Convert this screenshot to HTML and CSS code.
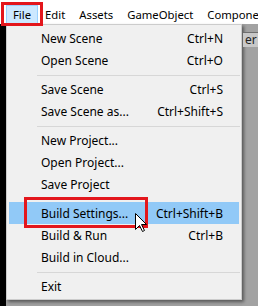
FILE: index.html
```html
<!DOCTYPE html>
<html lang="en">
<head>
  <meta charset="UTF-8">
  <title>File menu</title>
  <link rel="stylesheet" href="styles.css">
</head>
<body>
  <div class="menubar">
    <div class="top-item active">File</div>
    <div class="top-item">Edit</div>
    <div class="top-item">Assets</div>
    <div class="top-item">GameObject</div>
    <div class="top-item">Component</div>
  </div>

  <div class="workspace">
    <div class="left-strip"></div>

    <div class="menu-column">
      <div class="menu">
        <div class="item"><span>New Scene</span><span>Ctrl+N</span></div>
        <div class="item"><span>Open Scene</span><span>Ctrl+O</span></div>
        <div class="sep"></div>
        <div class="item"><span>Save Scene</span><span>Ctrl+S</span></div>
        <div class="item"><span>Save Scene as...</span><span>Ctrl+Shift+S</span></div>
        <div class="sep"></div>
        <div class="item"><span>New Project...</span></div>
        <div class="item"><span>Open Project...</span></div>
        <div class="item"><span>Save Project</span></div>
        <div class="gap"></div>
        <div class="item hover"><span>Build Settings...</span><span>Ctrl+Shift+B</span></div>
        <div class="item"><span>Build &amp; Run</span><span>Ctrl+B</span></div>
        <div class="item"><span>Build in Cloud...</span></div>
        <div class="sep"></div>
        <div class="item"><span>Exit</span></div>
      </div>
    </div>

    <div class="right-pane">
      <div class="tab">er</div>
    </div>
  </div>

  <!-- annotations drawn over the screenshot -->
  <div class="mark mark-file"></div>
  <div class="mark mark-build"></div>
  <svg class="cursor" width="13" height="20" viewBox="0 0 13 20">
    <path d="M0.5 0.5 L0.5 16.5 L4.5 12.5 L7.5 18.5 L9.5 17.5 L6.5 11.5 L11.5 11.5 Z" fill="#fff" stroke="#000" stroke-width="1"/>
  </svg>
</body>
</html>
```

FILE: styles.css
```css
* {
  box-sizing: border-box;
}
body {
  margin: 0;
  width: 258px;
  height: 306px;
  overflow: hidden;
  position: relative;
  font-family: "Noto Sans", "DejaVu Sans", sans-serif;
  font-size: 12px;
  color: #000;
  background: #a2a2a2;
}
.menubar {
  height: 24px;
  background: #fff;
  display: flex;
  padding: 5px 0 0 6px;
  white-space: nowrap;
  overflow: hidden;
  font-size: 11.3px;
}
.top-item {
  height: 19px;
  line-height: 18px;
  padding: 0 6px;
  border: 1px solid transparent;
}
.top-item.active {
  background: #cce8ff;
  border-color: #99d1ff;
}
.workspace {
  display: flex;
  height: 282px;
}
.left-strip {
  width: 6px;
  background: #000;
}
.menu-column {
  width: 236px;
  background: #a0a0a0;
}
.menu {
  background: #f0f0f0;
  border: 1px solid #cccccc;
  padding: 2px 0;
  box-shadow: 2px 2px 3px rgba(0, 0, 0, 0.45);
}
.item {
  height: 22px;
  margin: 0 2px;
  padding: 0 16px 0 32px;
  display: flex;
  align-items: center;
  justify-content: space-between;
  white-space: nowrap;
}
.item.hover {
  background: #91c9f7;
}
.sep {
  margin: 4px 1px 2px 30px;
  border-top: 1px solid #d7d7d7;
}
.gap {
  height: 7px;
}
.right-pane {
  flex: 1;
  padding-top: 8px;
  padding-left: 1px;
}
.tab {
  height: 15px;
  background: #c8c8c8;
  border-top: 1px solid #6e6e6e;
  font-size: 12px;
  line-height: 13px;
  padding-left: 2px;
  color: #222;
}
.mark {
  position: absolute;
  border: 3px solid #e3161c;
}
.mark-file {
  left: 1px;
  top: 2px;
  width: 42px;
  height: 24px;
}
.mark-build {
  left: 24px;
  top: 197px;
  width: 124px;
  height: 31px;
}
.cursor {
  position: absolute;
  left: 135px;
  top: 213px;
}
```
